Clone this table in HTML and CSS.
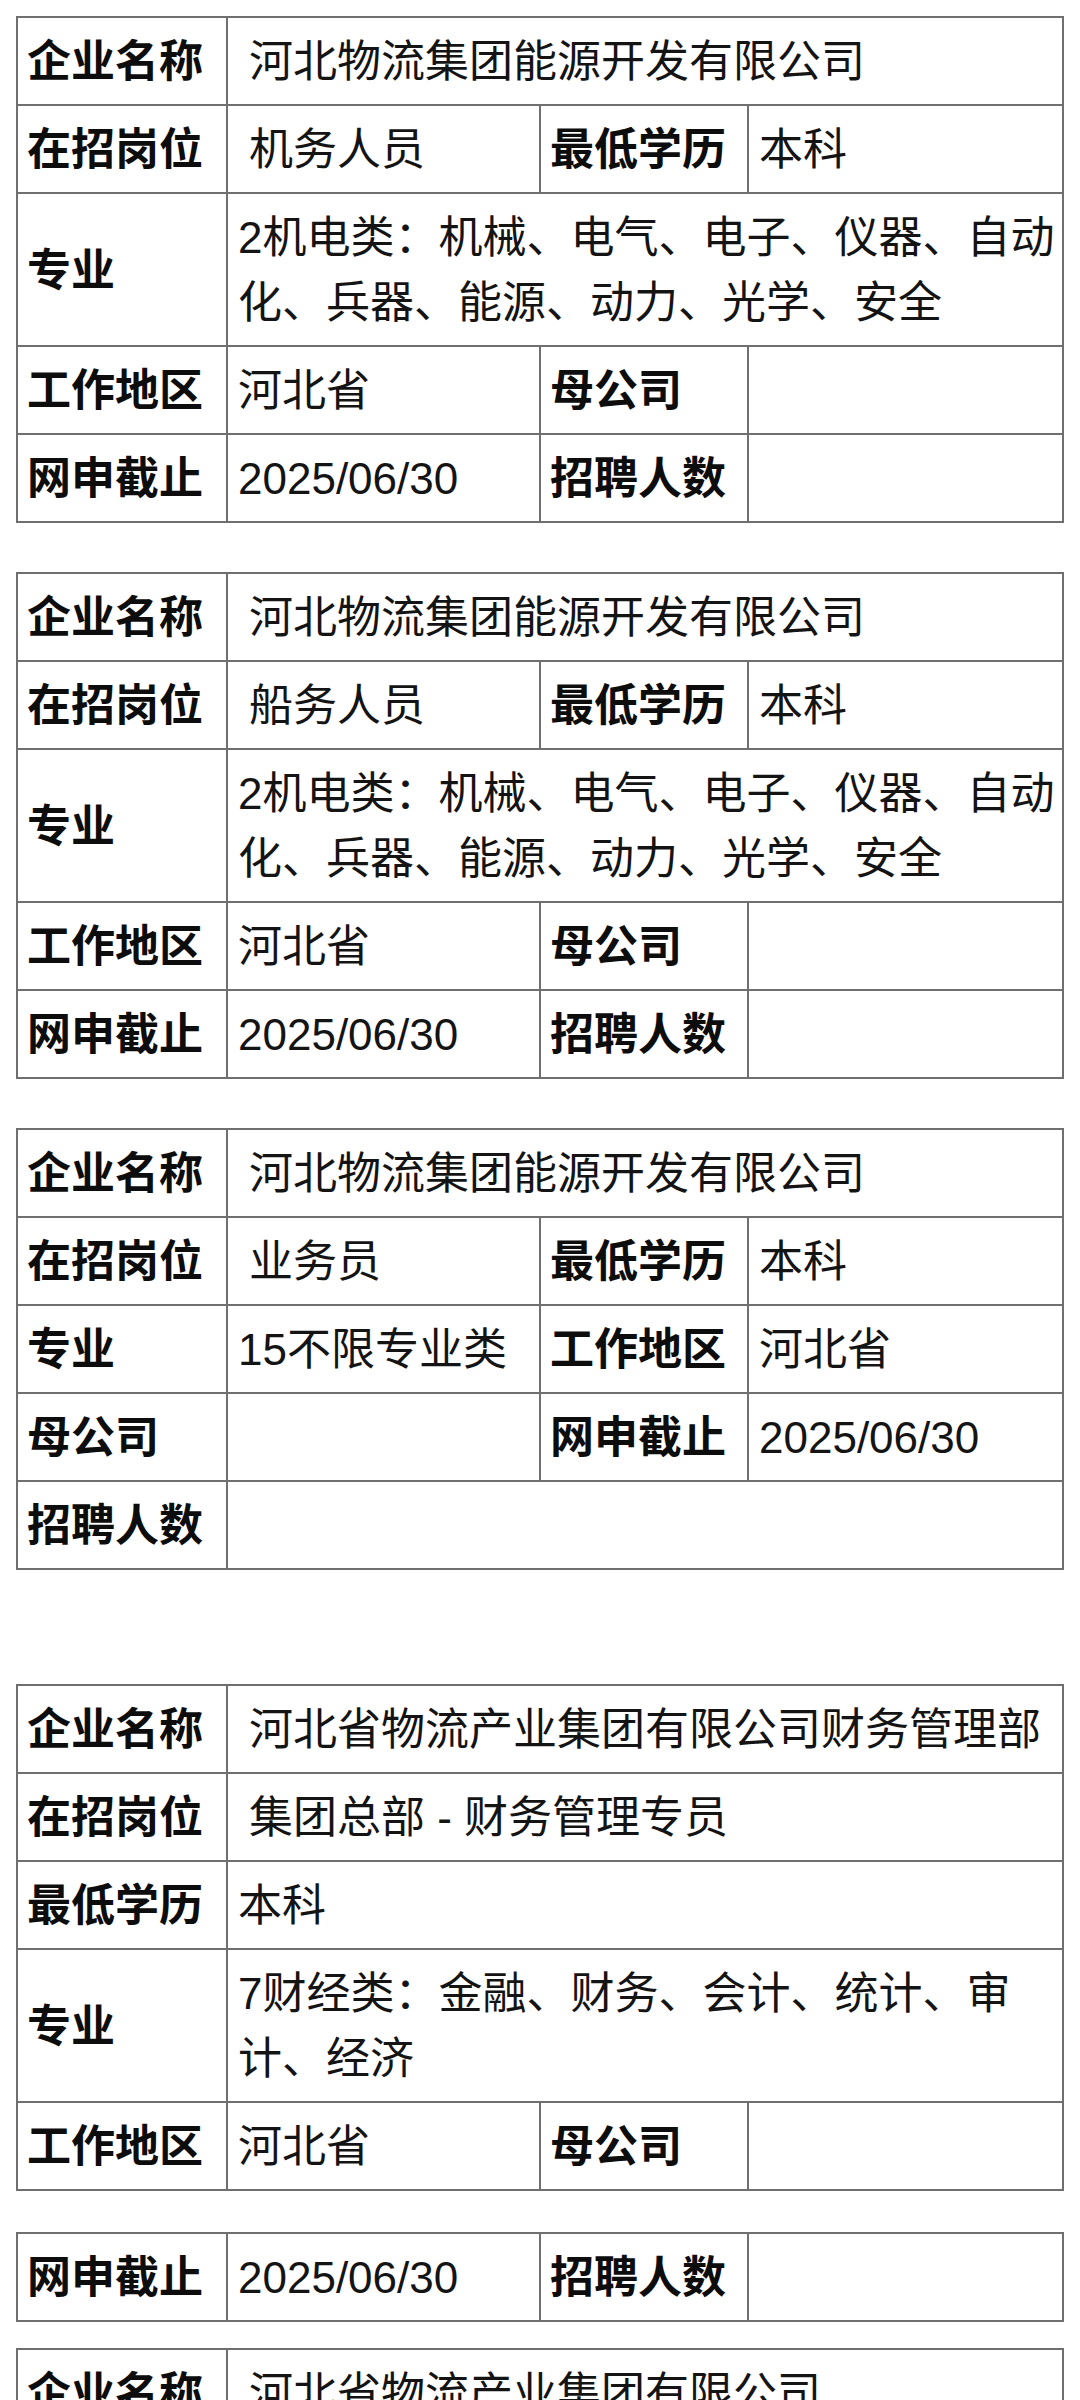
FILE: index.html
```html
<!DOCTYPE html>
<html lang="zh-CN">
<head>
<meta charset="utf-8">
<title>招聘信息</title>
<link rel="stylesheet" href="styles.css">
</head>
<body>
<main class="page">

<table class="job job--first">
  <colgroup><col class="c1"><col class="c2"><col class="c3"><col class="c4"></colgroup>
  <tr><th>企业名称</th><td colspan="3" class="lead">河北物流集团能源开发有限公司</td></tr>
  <tr><th>在招岗位</th><td class="lead">机务人员</td><th>最低学历</th><td>本科</td></tr>
  <tr><th>专业</th><td colspan="3">2机电类：机械、电气、电子、仪器、自动化、兵器、能源、动力、光学、安全</td></tr>
  <tr><th>工作地区</th><td>河北省</td><th>母公司</th><td></td></tr>
  <tr><th>网申截止</th><td>2025/06/30</td><th>招聘人数</th><td></td></tr>
</table>

<table class="job job--gap">
  <colgroup><col class="c1"><col class="c2"><col class="c3"><col class="c4"></colgroup>
  <tr><th>企业名称</th><td colspan="3" class="lead">河北物流集团能源开发有限公司</td></tr>
  <tr><th>在招岗位</th><td class="lead">船务人员</td><th>最低学历</th><td>本科</td></tr>
  <tr><th>专业</th><td colspan="3">2机电类：机械、电气、电子、仪器、自动化、兵器、能源、动力、光学、安全</td></tr>
  <tr><th>工作地区</th><td>河北省</td><th>母公司</th><td></td></tr>
  <tr><th>网申截止</th><td>2025/06/30</td><th>招聘人数</th><td></td></tr>
</table>

<table class="job job--gap">
  <colgroup><col class="c1"><col class="c2"><col class="c3"><col class="c4"></colgroup>
  <tr><th>企业名称</th><td colspan="3" class="lead">河北物流集团能源开发有限公司</td></tr>
  <tr><th>在招岗位</th><td class="lead">业务员</td><th>最低学历</th><td>本科</td></tr>
  <tr><th>专业</th><td>15不限专业类</td><th>工作地区</th><td>河北省</td></tr>
  <tr><th>母公司</th><td></td><th>网申截止</th><td>2025/06/30</td></tr>
  <tr><th>招聘人数</th><td colspan="3"></td></tr>
</table>

<table class="job job--section">
  <colgroup><col class="c1"><col class="c2"><col class="c3"><col class="c4"></colgroup>
  <tr><th>企业名称</th><td colspan="3" class="lead">河北省物流产业集团有限公司财务管理部</td></tr>
  <tr><th>在招岗位</th><td colspan="3" class="lead">集团总部 - 财务管理专员</td></tr>
  <tr><th>最低学历</th><td colspan="3">本科</td></tr>
  <tr><th>专业</th><td colspan="3">7财经类：金融、财务、会计、统计、审计、经济</td></tr>
  <tr><th>工作地区</th><td>河北省</td><th>母公司</th><td></td></tr>
</table>

<table class="job job--split">
  <colgroup><col class="c1"><col class="c2"><col class="c3"><col class="c4"></colgroup>
  <tr><th>网申截止</th><td>2025/06/30</td><th>招聘人数</th><td></td></tr>
</table>

<table class="job job--tight">
  <colgroup><col class="c1"><col class="c2"><col class="c3"><col class="c4"></colgroup>
  <tr><th>企业名称</th><td colspan="3" class="lead">河北省物流产业集团有限公司</td></tr>
  <tr><th>在招岗位</th><td colspan="3" class="lead">集团总部</td></tr>
</table>

</main>
</body>
</html>
```

FILE: styles.css
```css
html, body {
  margin: 0;
  padding: 0;
  background: #ffffff;
}

body {
  font-family: "Liberation Sans", "Noto Sans CJK SC", sans-serif;
  color: #111111;
}

.page {
  padding: 16px 0 0 16px;
}

.job {
  width: 1046px;
  table-layout: fixed;
  border-collapse: collapse;
  font-size: 44px;
  line-height: 65px;
}

.job--gap { margin-top: 49px; }
.job--section { margin-top: 114px; }
.job--split { margin-top: 41px; }
.job--tight { margin-top: 26px; }

.c1 { width: 210px; }
.c2 { width: 313px; }
.c3 { width: 208px; }
.c4 { width: 315px; }

.job th,
.job td {
  border: 2px solid #6f6f6f;
  padding: 11px 4px 10px 10px;
  vertical-align: middle;
  text-align: left;
}

.job th {
  font-weight: 700;
  color: #0d0d0d;
  white-space: nowrap;
  padding-left: 9px;
}

.job td {
  font-weight: 400;
  color: #141414;
}

.job td.lead {
  padding-left: 21px;
}
```
